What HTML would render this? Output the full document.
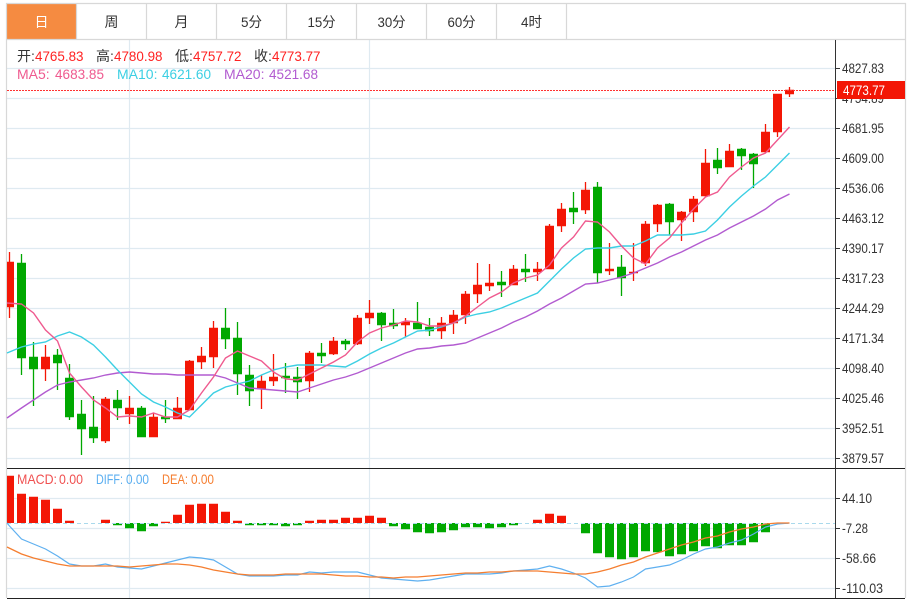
<!DOCTYPE html>
<html lang="zh">
<head>
<meta charset="utf-8">
<title>K线图</title>
<style>
html,body{margin:0;padding:0;background:#fff;width:912px;height:599px;overflow:hidden}
svg{display:block;position:absolute;left:0;top:0}
text{font-family:"Liberation Sans","Noto Sans CJK SC",sans-serif;font-size:14px}
.t{font-size:14px;fill:#333;text-anchor:middle}
.a{fill:#333;font-size:13.5px}
</style>
</head>
<body>
<svg width="912" height="599" viewBox="0 0 912 599" xmlns="http://www.w3.org/2000/svg">
<rect x="7" y="4" width="69" height="35" fill="#f58b41"/>
<!-- grid -->
<path fill="none" stroke="#dfeaf1" stroke-width="1.2" d="M7 68.5H835M7 98.5H835M7 128.5H835M7 158.5H835M7 188.5H835M7 218.5H835M7 248.5H835M7 278.5H835M7 308.5H835M7 338.5H835M7 368.5H835M7 398.5H835M7 428.5H835M7 458.5H835M7 498.5H835M7 528.5H835M7 558.5H835M7 588.5H835M129.5 40V598M369.5 40V598"/>
<!-- frame -->
<path fill="none" stroke="#d8d8d8" stroke-width="1.2" d="M6.5 3V598M905.5 3V598M6 3.5H906M6 39.5H906M76.5 4V39M146.5 4V39M216.5 4V39M286.5 4V39M356.5 4V39M426.5 4V39M496.5 4V39M566.5 4V39"/>
<text class="t" x="41.5" y="27" style="fill:#fff">日</text>
<text class="t" x="111.5" y="27">周</text>
<text class="t" x="181.5" y="27">月</text>
<text class="t" x="251.5" y="27" textLength="21" lengthAdjust="spacingAndGlyphs">5分</text>
<text class="t" x="321.5" y="27" textLength="28" lengthAdjust="spacingAndGlyphs">15分</text>
<text class="t" x="391.5" y="27" textLength="28" lengthAdjust="spacingAndGlyphs">30分</text>
<text class="t" x="461.5" y="27" textLength="28" lengthAdjust="spacingAndGlyphs">60分</text>
<text class="t" x="531.5" y="27" textLength="21" lengthAdjust="spacingAndGlyphs">4时</text>
<!-- red wicks -->
<path fill="none" stroke="#f31605" stroke-width="1.3" d="M9.5 252V318M45.5 345V381M105.5 397V443M129.5 396V424M153.5 413V437M177.5 397V419M189.5 360V410M201.5 347V369M213.5 321V368M261.5 375V409M273.5 354V386M309.5 351V392M333.5 337V355M357.5 315V345M369.5 300V324M405.5 318V337M441.5 317V339M453.5 310V334M465.5 291V324M477.5 263V303M489.5 264V291M513.5 265V285M537.5 262V281M549.5 224V269M561.5 203V232M585.5 182V214M609.5 243V275M633.5 243V281M645.5 221V266M657.5 204V232M681.5 211V241M693.5 196V222M705.5 149V197M729.5 144V167M765.5 124V153M777.5 94V137M789.5 87V97"/>
<!-- red bodies -->
<path id="rb" fill="#f31605" d="M7 262h7v45h-7zM41 357h9v12h-9zM101 399h9v42h-9zM125 408h9v6h-9zM149 417h9v20h-9zM173 408h9v11h-9zM185 361h9v49h-9zM197 356h9v6h-9zM209 328h9v29h-9zM257 381h9v8h-9zM269 377h9v4h-9zM305 353h9v28h-9zM329 341h9v13h-9zM353 318h9v26h-9zM365 313h9v5h-9zM401 322h9v3h-9zM437 323h9v8h-9zM449 315h9v8h-9zM461 294h9v21h-9zM473 285h9v9h-9zM485 283h9v3h-9zM509 269h9v16h-9zM533 269h9v3h-9zM545 226h9v43h-9zM557 209h9v17h-9zM581 190h9v20h-9zM605 269h9v2h-9zM629 272h9v1h-9zM641 224h9v39h-9zM653 205h9v19h-9zM677 212h9v8h-9zM689 199h9v13h-9zM701 163h9v33h-9zM725 151h9v16h-9zM761 132h9v20h-9zM773 94h9v38h-9zM785 90h9v4h-9z"/>
<use href="#rb" y="-.3"/><use href="#rb" y=".3"/>
<!-- green wicks -->
<path fill="none" stroke="#00a800" stroke-width="1.3" d="M21.5 254V375M33.5 342V406M57.5 349V390M69.5 364V420M81.5 400V455M93.5 396V443M117.5 390V420M141.5 406V437M165.5 400V423M225.5 308V349M237.5 322V395M249.5 365V406M285.5 363V393M297.5 367V399M321.5 343V363M345.5 339V350M381.5 312V341M393.5 309V329M417.5 302V329M429.5 318V336M501.5 271V297M525.5 254V282M573.5 192V224M597.5 182V283M621.5 255V296M669.5 203V235M717.5 148V174M741.5 148V170M753.5 153V188"/>
<!-- green bodies -->
<path id="gb" fill="#00a800" d="M17 263h9v95h-9zM29 357h9v12h-9zM53 355h9v8h-9zM65 378h9v39h-9zM77 414h9v15h-9zM89 427h9v11h-9zM113 400h9v8h-9zM137 408h9v29h-9zM161 417h9v2h-9zM221 328h9v11h-9zM233 338h9v36h-9zM245 375h9v16h-9zM281 376h9v2h-9zM293 377h9v5h-9zM317 353h9v3h-9zM341 341h9v3h-9zM377 313h9v12h-9zM389 323h9v3h-9zM413 323h9v6h-9zM425 327h9v4h-9zM497 282h9v3h-9zM521 269h9v3h-9zM569 208h9v4h-9zM593 187h9v86h-9zM617 267h9v11h-9zM665 204h9v18h-9zM713 160h9v8h-9zM737 149h9v7h-9zM749 154h9v10h-9z"/>
<use href="#gb" y="-.3"/><use href="#gb" y=".3"/>
<!-- MA lines -->
<polyline fill="none" stroke="#b25bd0" stroke-width="1.4" points="7,418 21.5,408 33.5,400 45.5,392 57.5,385 69.5,382 81.5,380 93.5,378 105.5,375 117.5,373 129.5,372 141.5,373 153.5,374 165.5,374 177.5,375 189.5,375 201.5,375 213.5,375 225.5,378 237.5,383 249.5,388 261.5,389 273.5,390 285.5,391 297.5,392 309.5,388 321.5,384 333.5,380 345.5,377 357.5,373 369.5,368 381.5,363 393.5,358 405.5,353 417.5,349 429.5,348 441.5,346 453.5,345 465.5,343 477.5,338 489.5,333 501.5,328 513.5,322 525.5,317 537.5,311 549.5,304 561.5,298 573.5,291 585.5,284 597.5,283 609.5,280 621.5,277 633.5,273 645.5,268 657.5,263 669.5,257 681.5,252 693.5,246 705.5,240 717.5,235 729.5,228 741.5,222 753.5,216 765.5,209 777.5,200 789.5,194"/>
<polyline fill="none" stroke="#3ccfe3" stroke-width="1.4" points="7,353 21.5,347 33.5,344 45.5,342 57.5,336 69.5,332 81.5,337 93.5,345 105.5,357 117.5,370 129.5,382 141.5,394 153.5,402 165.5,407 177.5,413 189.5,417 201.5,405 213.5,393 225.5,387 237.5,384 249.5,381 261.5,375 273.5,370 285.5,367 297.5,365 309.5,365 321.5,365 333.5,366 345.5,367 357.5,361 369.5,354 381.5,348 393.5,343 405.5,337 417.5,331 429.5,330 441.5,327 453.5,323 465.5,317 477.5,314 489.5,312 501.5,308 513.5,303 525.5,298 537.5,293 549.5,281 561.5,269 573.5,258 585.5,249 597.5,248 609.5,248 621.5,246 633.5,246 645.5,241 657.5,235 669.5,235 681.5,235 693.5,234 705.5,231 717.5,220 729.5,207 741.5,196 753.5,186 765.5,177 777.5,165 789.5,153"/>
<polyline fill="none" stroke="#ef5a8f" stroke-width="1.4" points="7,303 21.5,304 33.5,313 45.5,330 57.5,341 69.5,373 81.5,387 93.5,400 105.5,408 117.5,417 129.5,416 141.5,417 153.5,413 165.5,417 177.5,417 189.5,410 201.5,393 213.5,377 225.5,358 237.5,351 249.5,356 261.5,361 273.5,372 285.5,379 297.5,380 309.5,374 321.5,368 333.5,362 345.5,355 357.5,342 369.5,333 381.5,328 393.5,325 405.5,321 417.5,322 429.5,326 441.5,326 453.5,323 465.5,316 477.5,307 489.5,298 501.5,292 513.5,283 525.5,278 537.5,275 549.5,265 561.5,248 573.5,237 585.5,221 597.5,222 609.5,232 621.5,246 633.5,258 645.5,264 657.5,248 669.5,238 681.5,223 693.5,209 705.5,197 717.5,192 729.5,177 741.5,167 753.5,158 765.5,153 777.5,140 789.5,127"/>
<!-- MACD red bars -->
<path id="mr" fill="#f31605" d="M7 476h7v47h-7zM17 494h9v29h-9zM29 497h9v26h-9zM41 500h9v23h-9zM53 509h9v14h-9zM65 521h9v2h-9zM101 520h9v3h-9zM161 522h9v1h-9zM173 515h9v8h-9zM185 505h9v18h-9zM197 504h9v19h-9zM209 504h9v19h-9zM221 512h9v11h-9zM233 521h9v2h-9zM305 521h9v2h-9zM317 520h9v3h-9zM329 520h9v3h-9zM341 518h9v5h-9zM353 518h9v5h-9zM365 516h9v7h-9zM377 518h9v5h-9zM533 520h9v3h-9zM545 514h9v9h-9zM557 516h9v7h-9z"/>
<use href="#mr" y="-.3"/>
<!-- MACD green bars -->
<path id="mg" fill="#00a800" d="M113 523h9v2h-9zM125 523h9v5h-9zM137 523h9v8h-9zM149 523h9v3h-9zM245 523h9v2h-9zM257 523h9v2h-9zM269 523h9v2h-9zM281 523h9v3h-9zM293 523h9v2h-9zM389 523h9v3h-9zM401 523h9v6h-9zM413 523h9v9h-9zM425 523h9v10h-9zM437 523h9v9h-9zM449 523h9v7h-9zM461 523h9v4h-9zM473 523h9v4h-9zM485 523h9v5h-9zM497 523h9v4h-9zM509 523h9v2h-9zM581 523h9v10h-9zM593 523h9v30h-9zM605 523h9v34h-9zM617 523h9v36h-9zM629 523h9v34h-9zM641 523h9v28h-9zM653 523h9v29h-9zM665 523h9v33h-9zM677 523h9v31h-9zM689 523h9v28h-9zM701 523h9v23h-9zM713 523h9v25h-9zM725 523h9v22h-9zM737 523h9v22h-9zM749 523h9v19h-9zM761 523h9v9h-9z"/>
<use href="#mg" y=".3"/>
<path fill="none" stroke="#a9d9ec" stroke-width="1" stroke-dasharray="4 3" d="M7 523.5H835"/>
<!-- MACD lines -->
<polyline fill="none" stroke="#5fb0f0" stroke-width="1.2" points="7,523 9.5,526 21.5,539 33.5,544 45.5,549 57.5,556 69.5,564 81.5,566 93.5,566 105.5,564 117.5,567 129.5,568 141.5,569 153.5,566 165.5,563 177.5,560 189.5,557 201.5,558 213.5,560 225.5,567 237.5,574 249.5,576 261.5,576 273.5,576 285.5,575 297.5,575 309.5,572 321.5,573 333.5,572 345.5,572 357.5,572 369.5,575 381.5,578 393.5,579 405.5,580 417.5,581 429.5,580 441.5,578 453.5,576 465.5,574 477.5,574 489.5,574 501.5,573 513.5,571 525.5,570 537.5,569 549.5,566 561.5,569 573.5,573 585.5,578 597.5,587 609.5,586 621.5,582 633.5,577 645.5,569 657.5,567 669.5,565 681.5,560 693.5,554 705.5,549 717.5,547 729.5,543 741.5,540 753.5,534 765.5,527 777.5,524 789.5,523"/>
<polyline fill="none" stroke="#f57e30" stroke-width="1.3" points="7,547 21.5,554 33.5,558 45.5,561 57.5,564 69.5,566 81.5,566 93.5,566 105.5,566 117.5,566 129.5,567 141.5,566 153.5,565 165.5,564 177.5,564 189.5,565 201.5,567 213.5,570 225.5,572 237.5,574 249.5,575 261.5,575 273.5,575 285.5,574 297.5,574 309.5,574 321.5,574 333.5,575 345.5,576 357.5,576 369.5,577 381.5,577 393.5,578 405.5,577 417.5,577 429.5,576 441.5,575 453.5,574 465.5,573 477.5,573 489.5,572 501.5,572 513.5,571 525.5,571 537.5,571 549.5,572 561.5,573 573.5,574 585.5,574 597.5,572 609.5,569 621.5,565 633.5,562 645.5,557 657.5,553 669.5,549 681.5,545 693.5,542 705.5,538 717.5,536 729.5,532 741.5,529 753.5,527 765.5,524 777.5,523 789.5,523"/>
<!-- dark lines -->
<path fill="none" stroke="#222" stroke-width="1" d="M7 468.5H905M7 598.5H905"/>
<path fill="none" stroke="#333" stroke-width="1" d="M835.5 40V598M835 68.5h5M835 98.5h5M835 128.5h5M835 158.5h5M835 188.5h5M835 218.5h5M835 248.5h5M835 278.5h5M835 308.5h5M835 338.5h5M835 368.5h5M835 398.5h5M835 428.5h5M835 458.5h5M835 498.5h5M835 528.5h5M835 558.5h5M835 588.5h5"/>
<!-- axis labels -->
<text class="a" x="842" y="73" textLength="42" lengthAdjust="spacingAndGlyphs">4827.83</text>
<text class="a" x="842" y="103" textLength="42" lengthAdjust="spacingAndGlyphs">4754.89</text>
<text class="a" x="842" y="133" textLength="42" lengthAdjust="spacingAndGlyphs">4681.95</text>
<text class="a" x="842" y="163" textLength="42" lengthAdjust="spacingAndGlyphs">4609.00</text>
<text class="a" x="842" y="193" textLength="42" lengthAdjust="spacingAndGlyphs">4536.06</text>
<text class="a" x="842" y="223" textLength="42" lengthAdjust="spacingAndGlyphs">4463.12</text>
<text class="a" x="842" y="253" textLength="42" lengthAdjust="spacingAndGlyphs">4390.17</text>
<text class="a" x="842" y="283" textLength="42" lengthAdjust="spacingAndGlyphs">4317.23</text>
<text class="a" x="842" y="313" textLength="42" lengthAdjust="spacingAndGlyphs">4244.29</text>
<text class="a" x="842" y="343" textLength="42" lengthAdjust="spacingAndGlyphs">4171.34</text>
<text class="a" x="842" y="373" textLength="42" lengthAdjust="spacingAndGlyphs">4098.40</text>
<text class="a" x="842" y="403" textLength="42" lengthAdjust="spacingAndGlyphs">4025.46</text>
<text class="a" x="842" y="433" textLength="42" lengthAdjust="spacingAndGlyphs">3952.51</text>
<text class="a" x="842" y="463" textLength="42" lengthAdjust="spacingAndGlyphs">3879.57</text>
<text class="a" x="842" y="503" textLength="30" lengthAdjust="spacingAndGlyphs">44.10</text>
<text class="a" x="842" y="533" textLength="26" lengthAdjust="spacingAndGlyphs">-7.28</text>
<text class="a" x="842" y="563" textLength="34" lengthAdjust="spacingAndGlyphs">-58.66</text>
<text class="a" x="842" y="593" textLength="41" lengthAdjust="spacingAndGlyphs">-110.03</text>
<!-- price line -->
<path fill="none" stroke="#f33" stroke-width="1" stroke-dasharray="2 1" d="M7 90.5H835"/>
<rect x="837" y="81" width="68" height="18" fill="#f31605"/>
<text class="a" x="843" y="95" style="fill:#fff" textLength="42" lengthAdjust="spacingAndGlyphs">4773.77</text>
<!-- header -->
<text x="17" y="61" fill="#333">开:</text><text x="35" y="61" fill="#f22" textLength="48.5" lengthAdjust="spacingAndGlyphs">4765.83</text>
<text x="96" y="61" fill="#333">高:</text><text x="114" y="61" fill="#f22" textLength="48.5" lengthAdjust="spacingAndGlyphs">4780.98</text>
<text x="175" y="61" fill="#333">低:</text><text x="193" y="61" fill="#f22" textLength="48.5" lengthAdjust="spacingAndGlyphs">4757.72</text>
<text x="254" y="61" fill="#333">收:</text><text x="272" y="61" fill="#f22" textLength="48.5" lengthAdjust="spacingAndGlyphs">4773.77</text>
<text x="17" y="79" fill="#ef5a8f">MA5:</text><text x="55" y="79" fill="#ef5a8f" textLength="49" lengthAdjust="spacingAndGlyphs">4683.85</text>
<text x="117" y="79" fill="#3ccfe3">MA10:</text><text x="162" y="79" fill="#3ccfe3" textLength="49" lengthAdjust="spacingAndGlyphs">4621.60</text>
<text x="224" y="79" fill="#b25bd0">MA20:</text><text x="269" y="79" fill="#b25bd0" textLength="49" lengthAdjust="spacingAndGlyphs">4521.68</text>
<text x="17" y="484" fill="#f05050" textLength="40" lengthAdjust="spacingAndGlyphs">MACD:</text><text x="59" y="484" fill="#f05050" textLength="24" lengthAdjust="spacingAndGlyphs">0.00</text>
<text x="96" y="484" fill="#5aaef0" textLength="27" lengthAdjust="spacingAndGlyphs">DIFF:</text><text x="126" y="484" fill="#5aaef0" textLength="23" lengthAdjust="spacingAndGlyphs">0.00</text>
<text x="162" y="484" fill="#f57e30" textLength="26" lengthAdjust="spacingAndGlyphs">DEA:</text><text x="191" y="484" fill="#f57e30" textLength="23" lengthAdjust="spacingAndGlyphs">0.00</text>
</svg>
</body>
</html>
